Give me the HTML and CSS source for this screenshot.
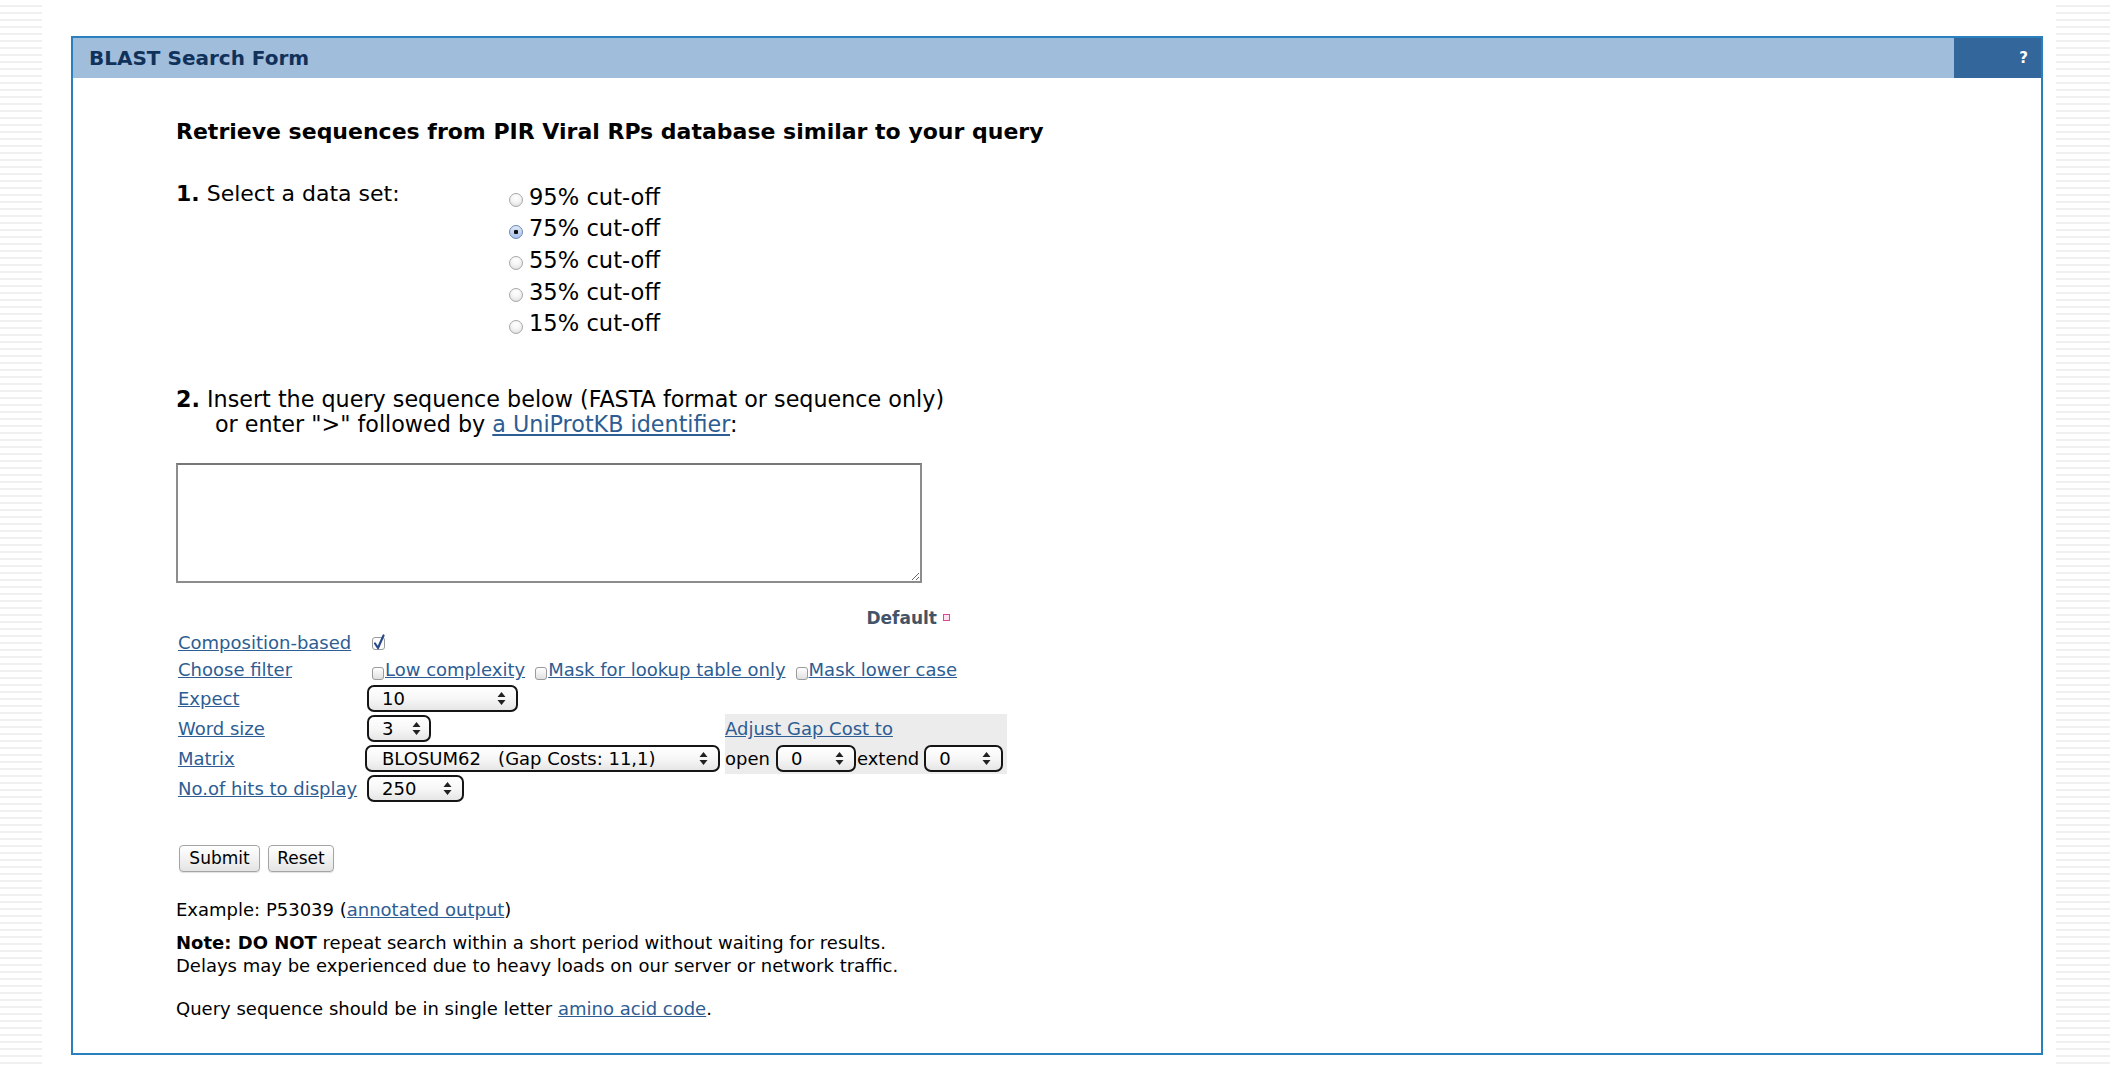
FILE: index.html
```html
<!DOCTYPE html>
<html>
<head>
<meta charset="utf-8">
<title>BLAST Search Form</title>
<link rel="stylesheet" href="styles.css">
</head>
<body>
<div class="page">
  <div class="panel">
    <div class="panel-head">
      <span class="title">BLAST Search Form</span>
      <span class="help">?</span>
    </div>
    <div class="panel-body">
      <h1 class="lead">Retrieve sequences from PIR Viral RPs database similar to your query</h1>

      <div class="step1">
        <div class="step-label"><b>1.</b> Select a data set:</div>
        <div class="radios">
          <label class="radio-row"><span class="radio"></span>95% cut-off</label>
          <label class="radio-row"><span class="radio on"></span>75% cut-off</label>
          <label class="radio-row"><span class="radio"></span>55% cut-off</label>
          <label class="radio-row"><span class="radio"></span>35% cut-off</label>
          <label class="radio-row"><span class="radio"></span>15% cut-off</label>
        </div>
      </div>

      <div class="step2">
        <div><b>2.</b> Insert the query sequence below (FASTA format or sequence only)</div>
        <div class="indent">or enter "&gt;" followed by <a href="#">a UniProtKB identifier</a>:</div>
      </div>

      <textarea class="seq"></textarea>

      <div class="default-row"><span class="default">Default</span><span class="pink"></span></div>

      <table class="params">
        <tr class="r1">
          <td class="lab"><a href="#">Composition-based</a></td>
          <td colspan="2"><span class="cb on"><svg width="14" height="17" viewBox="0 0 14 17"><rect x="0.5" y="3.5" width="12" height="12" rx="2.5" fill="#fff" stroke="#9a9a9a"/><path d="M3 9.5 L6 14 L11.5 1.5" fill="none" stroke="#2b4a8c" stroke-width="2.2" stroke-linecap="round" stroke-linejoin="round"/></svg></span></td>
        </tr>
        <tr class="r2">
          <td class="lab"><a href="#">Choose filter</a></td>
          <td colspan="2"><span class="filters"><span class="cb"></span><a href="#">Low complexity</a><span class="cb"></span><a href="#">Mask for lookup table only</a><span class="cb"></span><a href="#">Mask lower case</a></span></td>
        </tr>
        <tr class="r3">
          <td class="lab"><a href="#">Expect</a></td>
          <td colspan="2"><span class="sel s-expect"><span class="val">10</span><svg class="arr" width="9" height="15" viewBox="0 0 9 15"><path d="M0.5 6 L4.5 1 L8.5 6 Z M0.5 9 L4.5 14 L8.5 9 Z" fill="#222"/></svg></span></td>
        </tr>
        <tr class="r3">
          <td class="lab"><a href="#">Word size</a></td>
          <td class="c2"><span class="sel s-word"><span class="val">3</span><svg class="arr" width="9" height="15" viewBox="0 0 9 15"><path d="M0.5 6 L4.5 1 L8.5 6 Z M0.5 9 L4.5 14 L8.5 9 Z" fill="#222"/></svg></span></td>
          <td class="gap"><a href="#">Adjust Gap Cost to</a></td>
        </tr>
        <tr class="r3">
          <td class="lab"><a href="#">Matrix</a></td>
          <td class="c2"><span class="sel s-matrix"><span class="val">BLOSUM62&nbsp;&nbsp;&nbsp;(Gap Costs: 11,1)</span><svg class="arr" width="9" height="15" viewBox="0 0 9 15"><path d="M0.5 6 L4.5 1 L8.5 6 Z M0.5 9 L4.5 14 L8.5 9 Z" fill="#222"/></svg></span></td>
          <td class="gap"><span class="gaprow">open<span class="sel s-open"><span class="val">0</span><svg class="arr" width="9" height="15" viewBox="0 0 9 15"><path d="M0.5 6 L4.5 1 L8.5 6 Z M0.5 9 L4.5 14 L8.5 9 Z" fill="#222"/></svg></span>extend<span class="sel s-ext"><span class="val">0</span><svg class="arr" width="9" height="15" viewBox="0 0 9 15"><path d="M0.5 6 L4.5 1 L8.5 6 Z M0.5 9 L4.5 14 L8.5 9 Z" fill="#222"/></svg></span></span></td>
        </tr>
        <tr class="r3">
          <td class="lab"><a href="#">No.of hits to display</a></td>
          <td colspan="2"><span class="sel s-hits"><span class="val">250</span><svg class="arr" width="9" height="15" viewBox="0 0 9 15"><path d="M0.5 6 L4.5 1 L8.5 6 Z M0.5 9 L4.5 14 L8.5 9 Z" fill="#222"/></svg></span></td>
        </tr>
      </table>

      <div class="buttons"><button class="btn b-submit">Submit</button><button class="btn b-reset">Reset</button></div>

      <p class="example">Example: P53039 (<a href="#">annotated output</a>)</p>
      <p class="note"><b>Note: DO NOT</b> repeat search within a short period without waiting for results.<br>Delays may be experienced due to heavy loads on our server or network traffic.</p>
      <p class="query">Query sequence should be in single letter <a href="#">amino acid code</a>.</p>
    </div>
  </div>
</div>
</body>
</html>
```

FILE: styles.css
```css
html, body {
  margin: 0;
  height: 100%;
}
body {
  box-sizing: border-box;
  height: 1068px;
  overflow: hidden;
  padding: 0 54px 0 42px;
  background: repeating-linear-gradient(to bottom, #ffffff 0, #ffffff 5px, #f0f0f0 5px, #f0f0f0 7px);
  font-family: "DejaVu Sans", Verdana, sans-serif;
  color: #000;
}
a {
  color: #2d5d93;
  text-decoration: underline;
}
.page {
  box-sizing: border-box;
  height: 100%;
  background: #fff;
  padding: 36px 13px 0 29px;
}
.panel {
  border: 2px solid #2a7fbd;
}
.panel-head {
  display: flex;
  height: 40px;
  background: #a1bddc;
  align-items: center;
}
.title {
  flex: 1;
  padding-left: 16px;
  font-weight: bold;
  font-size: 20px;
  color: #10325a;
}
.help {
  box-sizing: border-box;
  width: 87px;
  height: 100%;
  background: #33669a;
  color: #fff;
  font-weight: bold;
  font-size: 15px;
  display: flex;
  align-items: center;
  justify-content: flex-end;
  padding-right: 13px;
}
.panel-body {
  padding: 40px 0 33px 103px;
}
.lead {
  margin: 0;
  font-size: 22px;
  line-height: 28px;
  font-weight: bold;
}
.step1 {
  display: flex;
  margin-top: 35px;
  font-size: 22px;
}
.step-label {
  width: 333px;
  line-height: 26px;
}
.radios {
  display: flex;
  flex-direction: column;
  font-size: 22.6px;
}
.radio-row {
  display: flex;
  align-items: center;
  height: 31.6px;
}
.radio {
  box-sizing: border-box;
  width: 14px;
  height: 14px;
  margin: 7px 6px 0 0;
  border: 1px solid #a8a8a8;
  border-radius: 50%;
  background: radial-gradient(circle at 50% 30%, #ffffff 0, #f4f4f4 45%, #d8d8d8 100%);
}
.radio.on {
  border-color: #6d87b3;
  background: radial-gradient(circle, #111 0, #111 2px, transparent 2.5px), linear-gradient(#dfe9f8, #a9c2ea);
}
.step2 {
  margin-top: 48px;
  font-size: 22.25px;
  line-height: 25px;
}
.indent {
  padding-left: 39px;
}
.seq {
  display: block;
  box-sizing: border-box;
  width: 746px;
  height: 120px;
  margin-top: 26px;
  border: 2px solid #8c8c8c;
  border-top-color: #777;
  background: #fff;
}
.default-row {
  display: flex;
  justify-content: flex-end;
  align-items: center;
  width: 774px;
  height: 20px;
  margin-top: 25px;
}
.default {
  font-size: 17px;
  font-weight: bold;
  color: #435468;
}
.pink {
  box-sizing: border-box;
  width: 7px;
  height: 7px;
  margin-left: 6px;
  border: 1.5px solid #e0449a;
  background: #fbe3ef;
}
.params {
  margin-top: 2px;
  border-collapse: collapse;
  font-size: 18px;
}
.params td {
  padding: 0;
  vertical-align: middle;
  white-space: nowrap;
}
.params tr.r1 { height: 26px; }
.params tr.r2 { height: 28px; }
.params tr.r3 { height: 30px; }
.params td.lab {
  box-sizing: border-box;
  width: 189px;
  padding-left: 2px;
}
.c2 {
  width: 360px;
}
.gap {
  width: 282px;
  background: #ececec;
}
.cb {
  display: inline-block;
  box-sizing: border-box;
  width: 12px;
  height: 13px;
  margin: 0 1px 0 8px;
  border: 1px solid #9a9a9a;
  border-radius: 3px;
  background: linear-gradient(#ffffff, #e0e0e0);
  vertical-align: -4px;
}
.cb.on {
  width: 14px;
  height: 17px;
  margin-left: 7px;
  border: 0;
  background: none;
  vertical-align: -2px;
}
.cb.on svg {
  display: block;
}
.filters .cb:first-child {
  margin-left: 7px;
}
.filters .cb + a {
  margin-right: 2px;
}
.sel {
  display: inline-flex;
  box-sizing: border-box;
  align-items: center;
  justify-content: space-between;
  height: 27px;
  margin-left: 2px;
  padding: 0 10px 0 13px;
  border: 2px solid #151515;
  border-radius: 7px;
  background: linear-gradient(#ffffff 0, #f7f7f7 50%, #e6e6e6 100%);
  font-size: 18px;
  vertical-align: middle;
}
.sel .arr {
  display: block;
  flex: none;
}
.s-expect { width: 151px; }
.s-word { width: 64px; padding-right: 8px; }
.s-matrix { width: 355px; margin-left: 0; padding-left: 15px; }
.s-hits { width: 97px; }
.s-open { width: 80px; margin: 0 1px 0 6px; }
.s-ext { width: 79px; margin: 0 0 0 5px; }
.gaprow {
  display: flex;
  align-items: center;
}
.buttons {
  display: flex;
  gap: 8px;
  margin: 41px 0 0 3px;
}
.btn {
  box-sizing: border-box;
  height: 27px;
  padding: 0;
  border: 1px solid #a5a5a5;
  border-radius: 4px;
  background: linear-gradient(#ffffff, #f2f2f2 50%, #e4e4e4);
  font-family: "DejaVu Sans", Verdana, sans-serif;
  font-size: 17px;
  color: #000;
  box-shadow: 0 1px 1px rgba(0,0,0,0.12);
}
.b-submit { width: 81px; }
.b-reset { width: 66px; }
.example {
  margin: 27px 0 0;
  font-size: 18px;
  line-height: 22px;
}
.note {
  margin: 10px 0 0;
  font-size: 18px;
  line-height: 23px;
}
.query {
  margin: 20px 0 0;
  font-size: 18px;
  line-height: 23px;
}
```
